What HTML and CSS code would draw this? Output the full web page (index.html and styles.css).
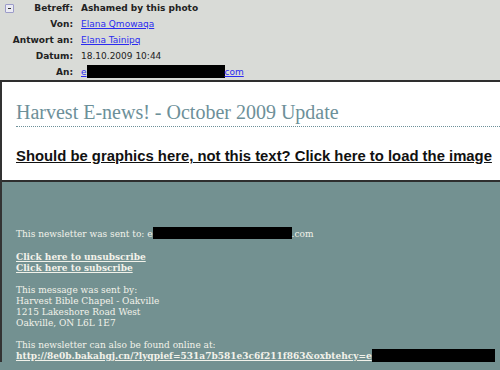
FILE: index.html
```html
<!DOCTYPE html>
<html>
<head>
<meta charset="utf-8">
<link rel="stylesheet" href="styles.css">
</head>
<body>
<div class="header">
  <div class="label first"><span class="minus"></span><span>Betreff:</span></div>
  <div class="value subject">Ashamed by this photo</div>
  <div class="label">Von:</div>
  <div class="value"><a class="mail" href="#">Elana Qmowaqa</a></div>
  <div class="label">Antwort an:</div>
  <div class="value"><a class="mail" href="#">Elana Tainipq</a></div>
  <div class="label">Datum:</div>
  <div class="value">18.10.2009 10:44</div>
  <div class="label">An:</div>
  <div class="value"><a class="mail" href="#">e<span class="redact hdr-redact"></span>com</a></div>
</div>
<div class="body">
  <div class="white">
    <h1 class="title">Harvest E-news! - October 2009 Update</h1>
    <a class="load" href="#">Should be graphics here, not this text? Click here to load the image</a>
  </div>
  <div class="teal">
    <p class="sent">This newsletter was sent to: e<span class="redact sent-redact"></span>.com</p>
    <p><a class="tl" href="#">Click here to unsubscribe</a><br><a class="tl" href="#">Click here to subscribe</a></p>
    <p>This message was sent by:<br>Harvest Bible Chapel - Oakville<br>1215 Lakeshore Road West<br>Oakville, ON L6L 1E7</p>
    <p>This newsletter can also be found online at:<br><a class="tl" href="#">http://8e0b.bakahgj.cn/?lyqpief=531a7b581e3c6f211f863&amp;oxbtehcy=e</a><span class="redact url-redact"></span></p>
  </div>
</div>
</body>
</html>
```
FILE: styles.css
```css
html, body {
  margin: 0;
  padding: 0;
}
body {
  width: 500px;
  height: 370px;
  overflow: hidden;
  background: #739191;
  font-family: "DejaVu Sans", sans-serif;
}
.header {
  background: #d9dbd7;
  border-top: 1px solid #1e1e1e;
  border-bottom: 2px solid #2e2e2e;
  display: grid;
  grid-template-columns: 73px 1fr;
  grid-auto-rows: 16px;
  column-gap: 8px;
  font-size: 9px;
  line-height: 16px;
  color: #222;
  margin-top: -1px;
}
.label {
  font-weight: bold;
  text-align: right;
  white-space: nowrap;
}
.first {
  display: flex;
  justify-content: space-between;
  align-items: center;
  padding-left: 5px;
}
.minus {
  width: 7px;
  height: 7px;
  border: 1px solid #9c9cc9;
  background: #ebebf3;
  position: relative;
  border-radius: 1px;
  margin-top: 1px;
}
.minus::after {
  content: "";
  position: absolute;
  left: 2px;
  top: 3px;
  width: 3px;
  height: 1px;
  background: #333;
}
.value {
  white-space: nowrap;
}
.subject {
  font-weight: bold;
}
.mail {
  color: #2b2bf0;
  text-decoration: underline;
}
.redact {
  display: inline-block;
  background: #000;
  vertical-align: middle;
}
.hdr-redact {
  width: 138px;
  height: 13px;
  margin-top: -2px;
}
.body {
  border-left: 2px solid #333;
}
.white {
  background: #fff;
  border-bottom: 2px solid #2e2e2e;
  padding: 19px 0 15px 14px;
}
.title {
  margin: 0;
  font-family: "Liberation Serif", "DejaVu Serif", serif;
  font-weight: normal;
  font-size: 20px;
  line-height: 23px;
  color: #6d9099;
  border-bottom: 1px dotted #6d9099;
  padding-bottom: 2px;
  margin-bottom: 21px;
}
.load {
  font-family: "Liberation Sans", Arial, sans-serif;
  font-weight: bold;
  font-size: 14.85px;
  line-height: 17px;
  color: #111;
  text-decoration: underline;
  white-space: nowrap;
  display: block;
}
.teal {
  padding: 47px 0 0 14px;
  font-family: "DejaVu Serif", serif;
  font-size: 9px;
  line-height: 11px;
  color: #f2f2ea;
}
.teal p {
  margin: 0 0 11px;
  white-space: nowrap;
}
.teal p.sent {
  margin-bottom: 12px;
}
.tl {
  color: #f2f2ea;
  font-weight: bold;
  text-decoration: underline;
}
.sent-redact {
  width: 139px;
  height: 12px;
  margin-top: -3px;
}
.url-redact {
  width: 123px;
  height: 13px;
  margin-top: -3px;
}
```
